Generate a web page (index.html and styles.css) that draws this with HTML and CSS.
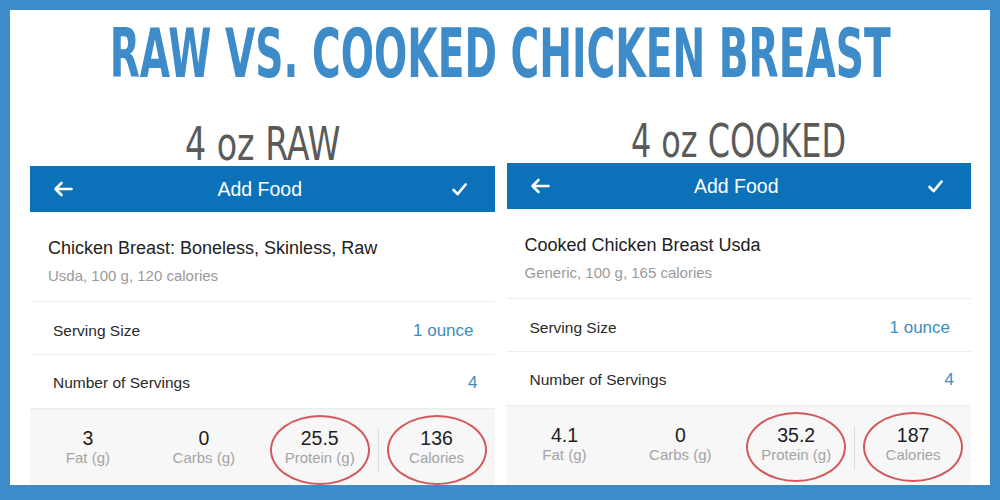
FILE: index.html
```html
<!DOCTYPE html>
<html>
<head>
<meta charset="utf-8">
<link rel="stylesheet" href="styles.css">
</head>
<body>
<div class="frame">
  <h1 class="title"><span class="title-text">RAW VS. COOKED CHICKEN BREAST</span></h1>
  <div class="columns">
    <section class="col">
      <h2 class="colhead"><span class="colhead-text sub-raw">4 oz RAW</span></h2>
      <div class="panel">
        <div class="appbar">
          <svg class="icon-back" width="20" height="16" viewBox="0 0 20 16"><path d="M18.5 8H2.5M8.5 2L2.5 8l6 6" fill="none" stroke="#fff" stroke-width="2.6" stroke-linecap="round" stroke-linejoin="round"/></svg>
          <span class="appbar-title">Add Food</span>
          <svg class="icon-check" width="15" height="13" viewBox="0 0 15 13"><path d="M1.6 7l4 4.2L13.6 1.5" fill="none" stroke="#fff" stroke-width="2.6" stroke-linecap="round" stroke-linejoin="round"/></svg>
        </div>
        <div class="food">
          <div class="food-name">Chicken Breast: Boneless, Skinless, Raw</div>
          <div class="food-meta">Usda, 100 g, 120 calories</div>
        </div>
        <div class="row row-first"><span class="row-label">Serving Size</span><span class="row-value unit">1 ounce</span></div>
        <div class="row"><span class="row-label">Number of Servings</span><span class="row-value">4</span></div>
        <div class="macros">
          <div class="macro"><div class="macro-num">3</div><div class="macro-label">Fat (g)</div></div>
          <div class="macro"><div class="macro-num">0</div><div class="macro-label">Carbs (g)</div></div>
          <div class="macro circled"><div class="macro-num">25.5</div><div class="macro-label">Protein (g)</div><span class="ring"></span></div>
          <div class="macro-divider"></div>
          <div class="macro circled"><div class="macro-num">136</div><div class="macro-label">Calories</div><span class="ring"></span></div>
        </div>
      </div>
    </section>
    <section class="col col-cooked">
      <h2 class="colhead"><span class="colhead-text sub-cooked">4 oz COOKED</span></h2>
      <div class="panel">
        <div class="appbar">
          <svg class="icon-back" width="20" height="16" viewBox="0 0 20 16"><path d="M18.5 8H2.5M8.5 2L2.5 8l6 6" fill="none" stroke="#fff" stroke-width="2.6" stroke-linecap="round" stroke-linejoin="round"/></svg>
          <span class="appbar-title">Add Food</span>
          <svg class="icon-check" width="15" height="13" viewBox="0 0 15 13"><path d="M1.6 7l4 4.2L13.6 1.5" fill="none" stroke="#fff" stroke-width="2.6" stroke-linecap="round" stroke-linejoin="round"/></svg>
        </div>
        <div class="food">
          <div class="food-name">Cooked Chicken Breast Usda</div>
          <div class="food-meta">Generic, 100 g, 165 calories</div>
        </div>
        <div class="row row-first"><span class="row-label">Serving Size</span><span class="row-value unit">1 ounce</span></div>
        <div class="row"><span class="row-label">Number of Servings</span><span class="row-value">4</span></div>
        <div class="macros">
          <div class="macro"><div class="macro-num">4.1</div><div class="macro-label">Fat (g)</div></div>
          <div class="macro"><div class="macro-num">0</div><div class="macro-label">Carbs (g)</div></div>
          <div class="macro circled"><div class="macro-num">35.2</div><div class="macro-label">Protein (g)</div><span class="ring"></span></div>
          <div class="macro-divider"></div>
          <div class="macro circled"><div class="macro-num">187</div><div class="macro-label">Calories</div><span class="ring"></span></div>
        </div>
      </div>
    </section>
  </div>
</div>
</body>
</html>
```
FILE: styles.css
```css
* { box-sizing: border-box; }
html, body { margin: 0; padding: 0; }
body { width: 1000px; height: 500px; overflow: hidden; background: #fff; }

.frame {
  width: 1000px;
  height: 500px;
  border: 10px solid #3d8bc8;
  border-bottom-width: 15px;
  background: #fff;
  display: flex;
  flex-direction: column;
  overflow: hidden;
}

.title {
  margin: 10px 0 0;
  height: 68px;
  line-height: 68px;
  display: flex;
  justify-content: center;
  font-family: "DejaVu Sans Condensed", "Liberation Sans", sans-serif;
  font-weight: bold;
  font-size: 68px;
  color: #3d8bc8;
  white-space: nowrap;
}
.title-text { display: inline-block; flex: none; transform: scaleX(0.64); }

.columns {
  flex: 1;
  display: flex;
  gap: 12px;
  padding: 0 19px 0 20px;
}
.col { flex: 1; display: flex; flex-direction: column; min-width: 0; }
.col-cooked { margin-top: -3px; }

.colhead {
  margin: 34px 0 0;
  height: 44px;
  line-height: 44px;
  display: flex;
  justify-content: center;
  font-family: "DejaVu Sans Condensed", "Liberation Sans", sans-serif;
  font-weight: normal;
  font-size: 47px;
  color: #5a5a5a;
  white-space: nowrap;
}
.colhead-text { display: inline-block; flex: none; }
.sub-raw { transform: scaleX(0.788); }
.sub-cooked { transform: scaleX(0.755); }

.panel {
  flex: 1;
  display: flex;
  flex-direction: column;
  font-family: "Liberation Sans", Arial, sans-serif;
  background: #fff;
}

.appbar {
  height: 46px;
  background: #0b72b9;
  display: grid;
  grid-template-columns: 1fr auto 1fr;
  align-items: center;
  padding: 0 28px 0 23px;
}
.icon-back { justify-self: start; }
.icon-check { justify-self: end; }
.appbar-title { color: #fff; font-size: 19.5px; }

.food {
  padding: 25px 18px 15px;
  border-bottom: 1px solid #eeeeee;
}
.food-name { font-size: 18px; line-height: 22px; color: #222; }
.food-meta { margin-top: 7px; font-size: 15px; line-height: 20px; color: #9a9a9a; }

.row {
  height: 54px;
  display: flex;
  justify-content: space-between;
  padding: 19px 17px 0 23px;
  font-size: 15.5px;
  line-height: 18px;
  border-bottom: 1px solid #eeeeee;
}
.row-first { height: 53px; padding-top: 20px; }
.row:last-of-type { border-bottom: 0; }
.row-label { color: #2a2a2a; }
.row-value { color: #3d8dc0; font-size: 17px; }
.unit { margin-right: 4px; }

.macros {
  flex: 1;
  display: flex;
  background: #f7f7f7;
  border-top: 1px solid #f0f0f0;
}
.macro {
  flex: 1;
  position: relative;
  text-align: center;
  padding-top: 17px;
}
.macro-num { font-size: 19.5px; line-height: 22px; color: #1e1e1e; }
.macro-label { font-size: 15px; line-height: 17px; color: #a4a4a4; }
.macro-divider {
  width: 1px;
  height: 44px;
  margin-top: 19px;
  background: #dddddd;
}
.ring {
  position: absolute;
  left: 50%;
  top: 5px;
  width: 100px;
  height: 70px;
  margin-left: -50px;
  border: 2.5px solid #d4585a;
  border-radius: 50%;
}
```
